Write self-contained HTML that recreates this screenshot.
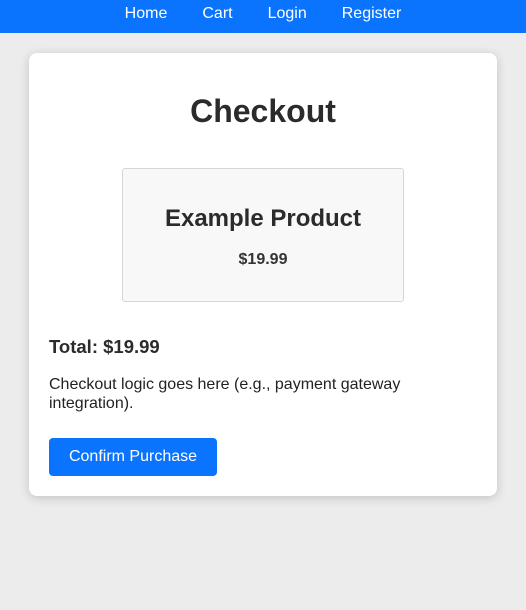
<!DOCTYPE html>
<html><head><style>
html,body{margin:0;padding:0;background:#ececec;font-family:"Liberation Sans",Arial,sans-serif;color:#333;}
nav{height:33px;background:#0a74ff;text-align:center;}
nav a{color:#fff;text-decoration:none;font-size:16px;line-height:28px;margin:0 17.5px;}
.card{position:absolute;left:29px;top:53px;width:468px;height:443px;background:#fff;border-radius:8px;box-shadow:0 2px 10px rgba(0,0,0,.18);}
h1{position:absolute;top:92px;left:0;width:526px;text-align:center;margin:0;font-size:32px;line-height:38px;color:#2b2b2b;}
.prod{position:absolute;left:122px;top:168px;width:280px;height:132px;border:1px solid #d6d6d6;border-radius:3px;background:#f8f8f8;text-align:center;}
.prod h2{margin:36px 0 0;font-size:24px;line-height:28px;color:#2b2b2b;}
.prod p{margin:18px 0 0;font-weight:bold;font-size:16px;}
.total{position:absolute;left:49px;top:336px;font-size:18.5px;font-weight:bold;margin:0;color:#2b2b2b;}
.desc{position:absolute;left:49px;top:375px;width:420px;font-size:16px;line-height:19px;margin:0;color:#222;}
button{position:absolute;left:49px;top:438px;width:168px;height:38px;background:#0a74ff;color:#fff;border:0;border-radius:4px;font-size:16px;font-family:inherit;}
</style></head><body>
<nav><a>Home</a><a>Cart</a><a>Login</a><a>Register</a></nav>
<div class="card"></div>
<h1>Checkout</h1>
<div class="prod"><h2>Example Product</h2><p>$19.99</p></div>
<p class="total">Total: $19.99</p>
<p class="desc">Checkout logic goes here (e.g., payment gateway integration).</p>
<button>Confirm Purchase</button>
</body></html>
